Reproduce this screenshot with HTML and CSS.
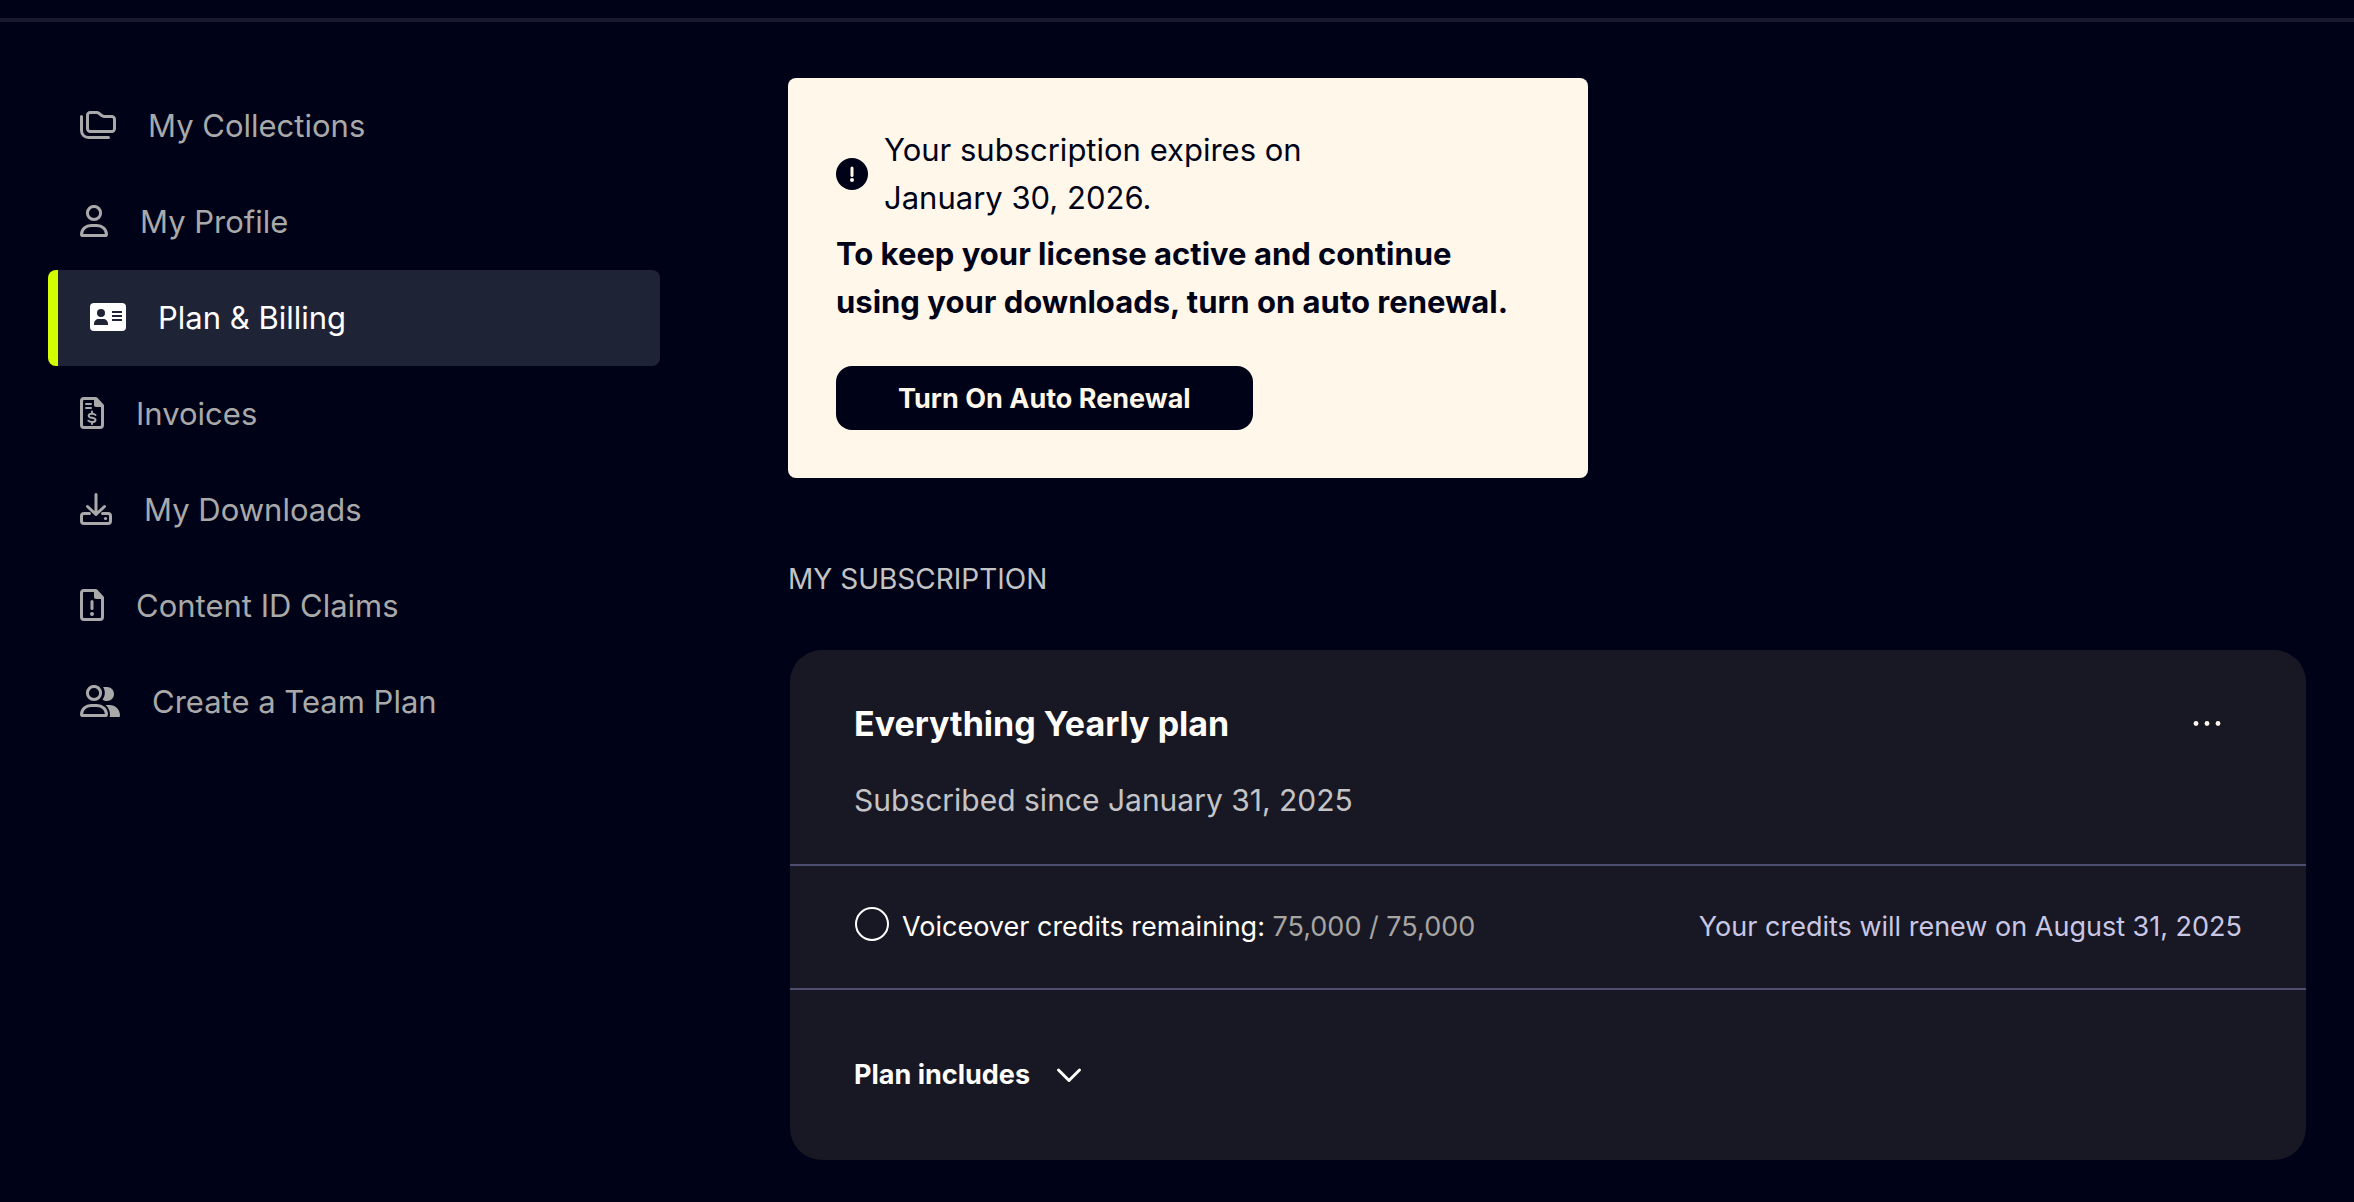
FILE: index.html
```html
<!DOCTYPE html>
<html lang="en">
<head>
    <meta charset="UTF-8">
    <meta name="viewport" content="width=device-width, initial-scale=1.0">
    <title>Plan &amp; Billing</title>
    <link rel="stylesheet" href="styles.css">
</head>
<body>
    <header class="topbar"></header>

    <div class="page">
        <nav class="sidebar" aria-label="Account">
            <a class="nav-item" href="#collections">
                <svg class="icon" width="36" height="28" viewBox="0 0 36 28" aria-hidden="true">
                    <path d="M10.2 1.5h6.6c.8 0 1.400.2 2 .8l3.200 2.400c.6.5 1.200.8 2 .8h7.800c1.500 0 2.700 1.200 2.700 2.700v9.600c0 1.500-1.200 2.700-2.700 2.700H10.200c-1.500 0-2.700-1.200-2.700-2.700V4.200c0-1.500 1.200-2.700 2.700-2.700z"/>
                    <path d="M1.5 5.5v14c0 4 3 7 7 7h20"/>
                </svg>
                My Collections
            </a>
            <a class="nav-item" href="#profile">
                <svg class="icon" width="28" height="32" viewBox="0 0 28 32" aria-hidden="true">
                    <circle cx="14" cy="8" r="6.6"/>
                    <path d="M1.5 29.2c.3-5.2 4.5-8.7 9.5-8.7h6c5 0 9.2 3.5 9.5 8.7 0 .8-.4 1.3-1.2 1.3H2.7c-.8 0-1.2-.5-1.2-1.3z"/>
                </svg>
                My Profile
            </a>
            <a class="nav-item active" href="#billing" aria-current="page">
                <svg class="icon-card" width="36" height="28" viewBox="0 0 36 28" aria-hidden="true">
                    <rect class="face" width="36" height="28" rx="4"/>
                    <circle cx="11" cy="10" r="4"/>
                    <path d="M4 22v-1c0-3 2-5 5-5h4c3 0 5 2 5 5v1zM22 8h10v2H22zM22 12h10v2H22zM22 16h10v2H22z"/>
                </svg>
                Plan &amp; Billing
            </a>
            <a class="nav-item" href="#invoices">
                <svg class="icon" width="24" height="32" viewBox="0 0 24 32" aria-hidden="true">
                    <path d="M4 1.5h12l6.5 7V28c0 1.5-1 2.5-2.5 2.5H4c-1.5 0-2.5-1-2.5-2.5V4c0-1.5 1-2.5 2.5-2.5z"/>
                    <path class="solid" d="M14 1h3l6 7v2h-7c-1.2 0-2-.8-2-2z"/>
                    <path class="thin" d="M6 7h5M6 11h5M12 14.5v2M12 25v2M15.5 18c-.8-1-2-1.3-3.5-1.3-2 0-3.3.8-3.3 2 0 3 6.8 1.3 6.8 4.3 0 1.3-1.4 2.1-3.5 2.1-1.5 0-2.8-.4-3.7-1.4"/>
                </svg>
                Invoices
            </a>
            <a class="nav-item" href="#downloads">
                <svg class="icon" width="32" height="32" viewBox="0 0 32 32" aria-hidden="true">
                    <path d="M16 1.5v20M7.5 13.5l8.5 8 8.5-8"/>
                    <path d="M9.5 20.5H4c-1.5 0-2.5 1-2.5 2.5v5c0 1.5 1 2.5 2.5 2.5h24c1.5 0 2.5-1 2.5-2.5v-5c0-1.5-1-2.5-2.5-2.5h-5.5"/>
                    <circle class="solid" cx="25.5" cy="25.5" r="1.6"/>
                </svg>
                My Downloads
            </a>
            <a class="nav-item" href="#claims">
                <svg class="icon" width="24" height="32" viewBox="0 0 24 32" aria-hidden="true">
                    <path d="M4 1.5h12l6.5 7V28c0 1.5-1 2.5-2.5 2.5H4c-1.5 0-2.5-1-2.5-2.5V4c0-1.5 1-2.5 2.5-2.5z"/>
                    <path class="solid" d="M14 1h3l6 7v2h-7c-1.2 0-2-.8-2-2z"/>
                    <path d="M12 12.5v7"/>
                    <circle class="solid" cx="12" cy="25" r="2"/>
                </svg>
                Content ID Claims
            </a>
            <a class="nav-item" href="#team">
                <svg class="icon" width="40" height="32" viewBox="0 0 40 32" aria-hidden="true">
                    <circle cx="14" cy="8" r="6.6"/>
                    <path d="M1.5 29.2c.3-5.2 4.5-8.7 9.5-8.7h6c5 0 9.2 3.5 9.5 8.7 0 .8-.4 1.3-1.2 1.3H2.7c-.8 0-1.2-.5-1.2-1.3z"/>
                    <path class="solid" d="M23 2h4c4 0 7 3 7 7s-3 7-7 7c-1.8 0-3.3-.5-4.5-1.6C24 12.5 24.8 10.5 24.8 8S24.2 3.8 23 2z"/>
                    <path class="solid" d="M25.5 20h4C35.5 20 40 24.5 40 30.5c0 1-.5 1.5-1.5 1.5h-9c.4-.6.5-1.2.5-2 0-4-1.5-7.5-4.5-10z"/>
                </svg>
                Create a Team Plan
            </a>
        </nav>

        <main class="content">
            <section class="notice">
                <div class="notice-top">
                    <svg class="notice-icon" width="32" height="32" viewBox="0 0 32 32" aria-hidden="true">
                        <circle cx="16" cy="16" r="16"/>
                        <path class="mark" d="M16 10v7.5"/>
                        <circle class="mark-dot" cx="16" cy="22" r="2"/>
                    </svg>
                    <p>Your subscription expires on<br>January 30, 2026.</p>
                </div>
                <p class="notice-strong">To keep your license active and continue<br>using your downloads, turn on auto renewal.</p>
                <button class="renew-button" type="button">Turn On Auto Renewal</button>
            </section>

            <h2 class="section-title">MY SUBSCRIPTION</h2>

            <section class="plan">
                <div class="plan-header">
                    <div>
                        <h3 class="plan-name">Everything Yearly plan</h3>
                        <p class="plan-since">Subscribed since January 31, 2025</p>
                    </div>
                    <button class="more-button" type="button" aria-label="More options">
                        <svg width="28" height="8" viewBox="0 0 28 8" aria-hidden="true">
                            <circle cx="3" cy="3.5" r="2.4"/>
                            <circle cx="14" cy="3.5" r="2.4"/>
                            <circle cx="25" cy="3.5" r="2.4"/>
                        </svg>
                    </button>
                </div>
                <div class="plan-credits">
                    <div class="credits-left">
                        <svg class="credits-ring" width="36" height="36" viewBox="0 0 36 36" aria-hidden="true">
                            <circle cx="18" cy="18" r="16"/>
                        </svg>
                        <p>Voiceover credits remaining: <span class="credits-count">75,000 / 75,000</span></p>
                    </div>
                    <p class="credits-renew">Your credits will renew on August 31, 2025</p>
                </div>
                <div class="plan-footer">
                    <button class="includes-button" type="button" aria-expanded="false">
                        Plan includes
                        <svg width="26" height="16" viewBox="0 0 26 16" aria-hidden="true">
                            <path d="M2.5 3L13 13.5 23.5 3"/>
                        </svg>
                    </button>
                </div>
            </section>
        </main>
    </div>
</body>
</html>
```
FILE: styles.css
```css
* {
    box-sizing: border-box;
}

body {
    margin: 0;
    background-color: #000218;
    color: #fffefa;
    font-family: Inter, "Liberation Sans", sans-serif;
    font-size: 31px;
    line-height: 48px;
}

p,
h2,
h3 {
    margin: 0;
}

button {
    border: none;
    background: none;
    color: inherit;
    font-family: inherit;
    cursor: pointer;
}

svg {
    flex-shrink: 0;
}

.topbar {
    height: 22px;
    border-bottom: 4px solid #1a1b33;
}

.page {
    display: grid;
    grid-template-columns: 612px 1fr;
    gap: 128px;
    padding: 56px 48px 42px;
}

/* Sidebar */

.sidebar {
    display: flex;
    flex-direction: column;
}

.nav-item {
    display: flex;
    align-items: center;
    gap: 32px;
    height: 96px;
    padding: 0 32px;
    border-radius: 8px;
    color: #a9a9a9;
    text-decoration: none;
}

.nav-item svg {
    margin-bottom: 2px;
}

.nav-item.active {
    border-left: 10px solid #d4ff00;
    background-color: #1f2336;
    color: white;
}

.icon {
    fill: none;
    stroke: currentColor;
    stroke-width: 3;
    stroke-linecap: round;
    stroke-linejoin: round;
}

.icon .solid {
    fill: currentColor;
    stroke: none;
}

.icon .thin {
    stroke-width: 2;
}

.icon-card {
    fill: #1f2336;
}

.icon-card .face {
    fill: white;
}

/* Renewal notice */

.notice {
    max-width: 800px;
    padding: 48px;
    border-radius: 8px;
    background-color: #fff7e9;
    color: #000218;
}

.notice-top {
    display: flex;
    align-items: center;
    gap: 16px;
    margin-bottom: 8px;
}

.notice-icon {
    fill: #000218;
}

.notice-icon .mark {
    stroke: #fff7e9;
    stroke-width: 3;
    stroke-linecap: round;
}

.notice-icon .mark-dot {
    fill: #fff7e9;
}

.notice-strong {
    font-weight: 700;
}

.renew-button {
    display: block;
    height: 64px;
    margin-top: 40px;
    padding: 0 62px;
    border-radius: 16px;
    background-color: #000218;
    color: #fff7e9;
    font-size: 27px;
    font-weight: 700;
}

/* Subscription */

.section-title {
    margin: 80px 0 50px;
    color: #c4c4c4;
    font-size: 28px;
    font-weight: 400;
    line-height: 42px;
}

.plan {
    margin-left: 2px;
    border-radius: 32px;
    background-color: #181824;
}

.plan-header {
    display: flex;
    justify-content: space-between;
    align-items: flex-start;
    padding: 50px 64px 40px;
    border-bottom: 2px solid #4d4e70;
}

.plan-name {
    margin-bottom: 28px;
    font-size: 34px;
    font-weight: 700;
}

.plan-since {
    color: #c4c4c6;
    font-size: 30px;
}

.more-button {
    display: flex;
    justify-content: center;
    align-items: center;
    width: 70px;
    height: 48px;
    padding: 0;
}

.more-button svg {
    fill: #fff7e9;
}

.plan-credits {
    display: flex;
    justify-content: space-between;
    align-items: center;
    gap: 32px;
    padding: 37px 64px;
    border-bottom: 2px solid #4d4e70;
    font-size: 27px;
}

.credits-left {
    display: flex;
    align-items: center;
    gap: 12px;
}

.credits-ring {
    margin-bottom: 6px;
    fill: none;
    stroke: white;
    stroke-width: 2;
}

.credits-count {
    color: #a6a5a2;
}

.credits-renew {
    color: #c9c7e4;
}

.plan-footer {
    padding: 61px 64px;
}

.includes-button {
    display: flex;
    align-items: center;
    gap: 26px;
    padding: 0;
    font-size: 27px;
    font-weight: 700;
    line-height: 48px;
}

.includes-button svg {
    fill: none;
    stroke: currentColor;
    stroke-width: 3;
    stroke-linecap: round;
    stroke-linejoin: round;
}

@media (max-width: 1500px) {
    .page {
        grid-template-columns: 1fr;
        gap: 48px;
    }

    .plan-credits {
        flex-direction: column;
        align-items: flex-start;
    }
}
```
